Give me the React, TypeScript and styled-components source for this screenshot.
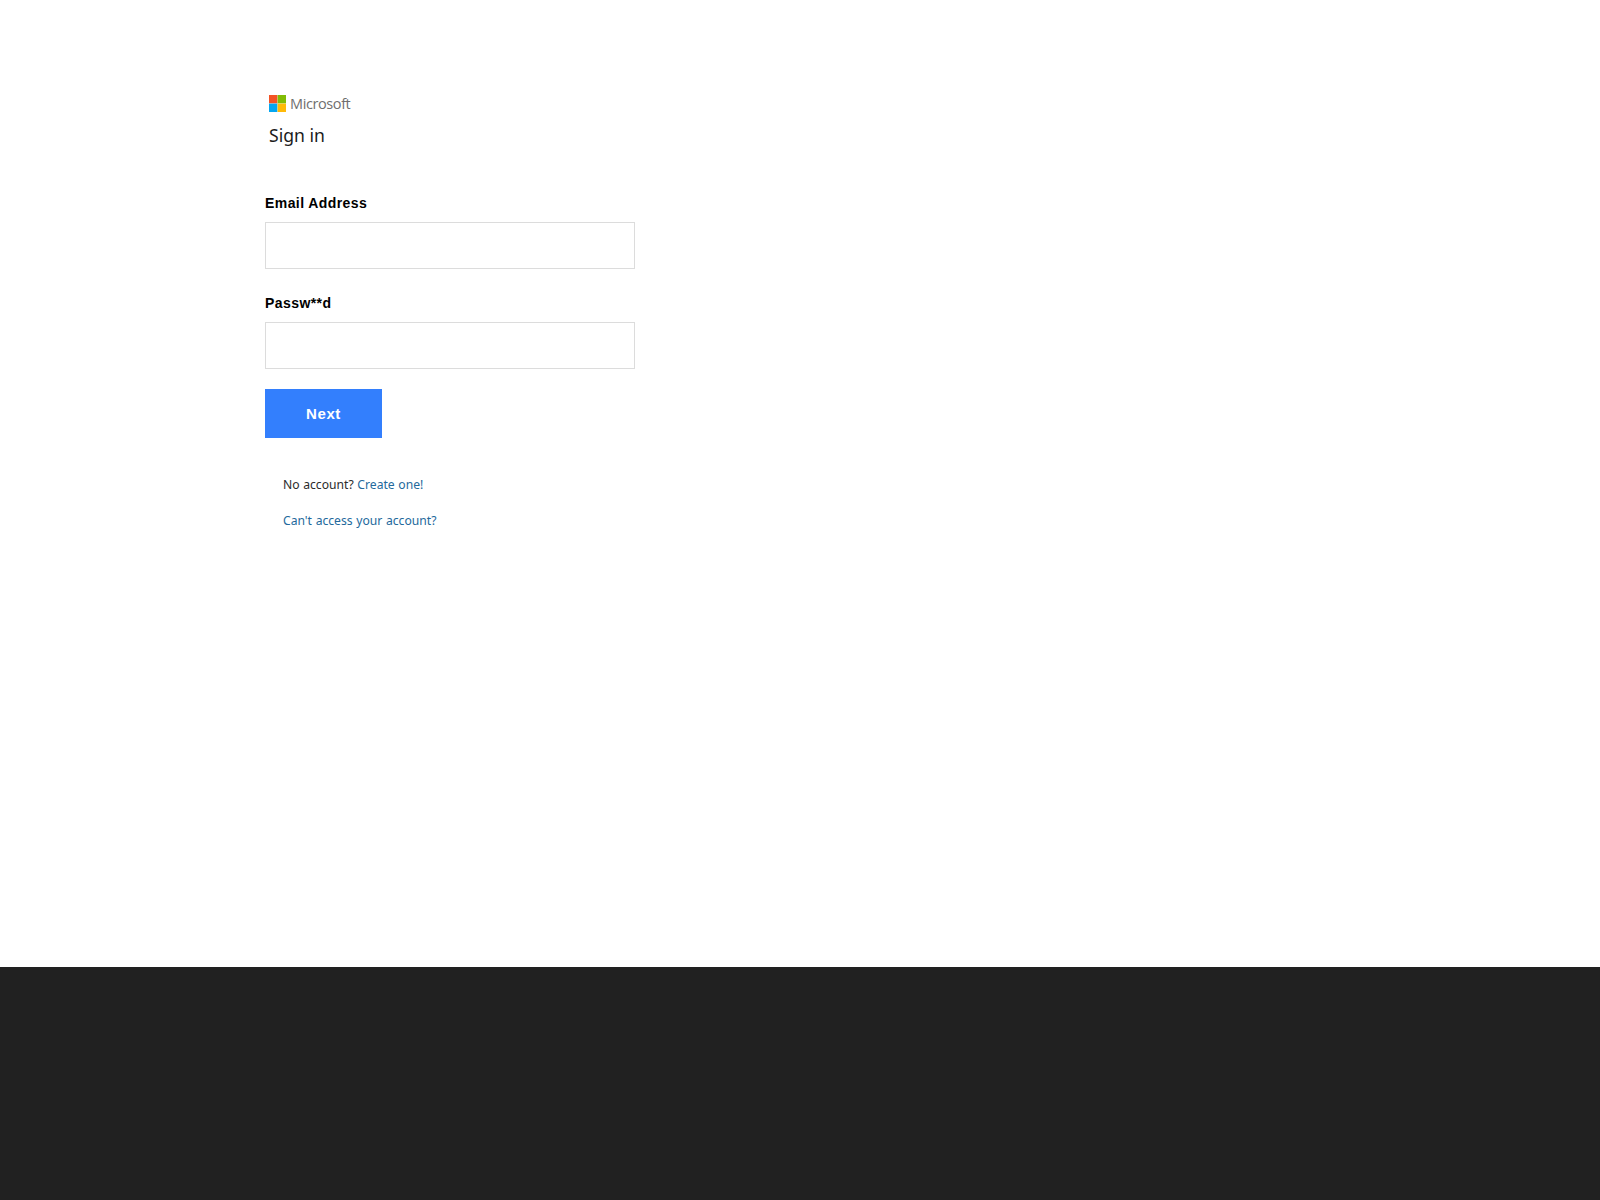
import React from "react";
import styled, { createGlobalStyle } from "styled-components";

const Global = createGlobalStyle`
  html, body { margin: 0; padding: 0; background: #fff; }
  body { font-family: "Noto Sans", "Open Sans", sans-serif; }
`;

const Page = styled.div`
  display: flex;
  flex-direction: column;
  height: 1200px;
  overflow: hidden;
`;

const Main = styled.main`
  height: 967px;
  padding: 95px 0 0 265px;
  box-sizing: border-box;
`;

const Brand = styled.div`
  display: flex;
  align-items: center;
  gap: 4px;
  height: 17px;
  margin-left: 4px;
  color: #6f6f6f;
  font-family: "Open Sans", sans-serif;
  font-size: 14.5px;
  letter-spacing: -0.4px;
`;

const Title = styled.h1`
  margin: 11px 0 0 4px;
  font-family: "Noto Sans", sans-serif;
  font-weight: 400;
  font-size: 17.6px;
  line-height: 24px;
  color: #1b1b1b;
`;

const Form = styled.form`
  display: flex;
  flex-direction: column;
  margin-top: 46px;
  width: 370px;
`;

const Field = styled.div`
  display: flex;
  flex-direction: column;
  height: 100px;
`;

const Label = styled.label`
  font-family: "Liberation Sans", Arial, sans-serif;
  font-weight: 700;
  font-size: 14px;
  letter-spacing: 0.42px;
  line-height: 20px;
  color: #000;
  margin-bottom: 9px;
`;

const Input = styled.input`
  box-sizing: border-box;
  width: 370px;
  height: 47px;
  border: 1px solid #dcdcdc;
  background: #fff;
  outline: none;
`;

const NextButton = styled.button`
  width: 117px;
  height: 49px;
  margin-top: -4px;
  border: 0;
  background: #337ffd;
  color: #fff;
  font-family: "Liberation Sans", Arial, sans-serif;
  font-weight: 700;
  font-size: 15px;
  letter-spacing: 0.6px;
`;

const Links = styled.div`
  display: flex;
  flex-direction: column;
  gap: 16px;
  margin: 37px 0 0 18px;
  font-family: "Noto Sans", sans-serif;
  font-size: 12.15px;
  word-spacing: 0.5px;
  line-height: 20px;
  color: #2b2b2b;
`;

const Row = styled.p`
  margin: 0;
`;

const Link = styled.a`
  color: #23699c;
  text-decoration: none;
`;

const Footer = styled.footer`
  flex: 1;
  background: #212121;
`;

const Logo = () => (
  <svg width="17" height="17" viewBox="0 0 17 17" aria-hidden="true">
    <rect width="8.4" height="8.4" fill="#f35325" />
    <rect x="8.6" width="8.4" height="8.4" fill="#81bc06" />
    <rect y="8.6" width="8.4" height="8.4" fill="#05a6f0" />
    <rect x="8.6" y="8.6" width="8.4" height="8.4" fill="#ffba08" />
  </svg>
);

export default function App() {
  return (
    <Page>
      <Global />
      <Main>
        <Brand>
          <Logo />
          <span>Microsoft</span>
        </Brand>
        <Title>Sign in</Title>
        <Form>
          <Field>
            <Label>Email Address</Label>
            <Input type="text" />
          </Field>
          <Field>
            <Label>Passw**d</Label>
            <Input type="password" />
          </Field>
          <NextButton type="button">Next</NextButton>
        </Form>
        <Links>
          <Row>
            No account? <Link href="#">Create one!</Link>
          </Row>
          <Row>
            <Link href="#">Can't access your account?</Link>
          </Row>
        </Links>
      </Main>
      <Footer />
    </Page>
  );
}
